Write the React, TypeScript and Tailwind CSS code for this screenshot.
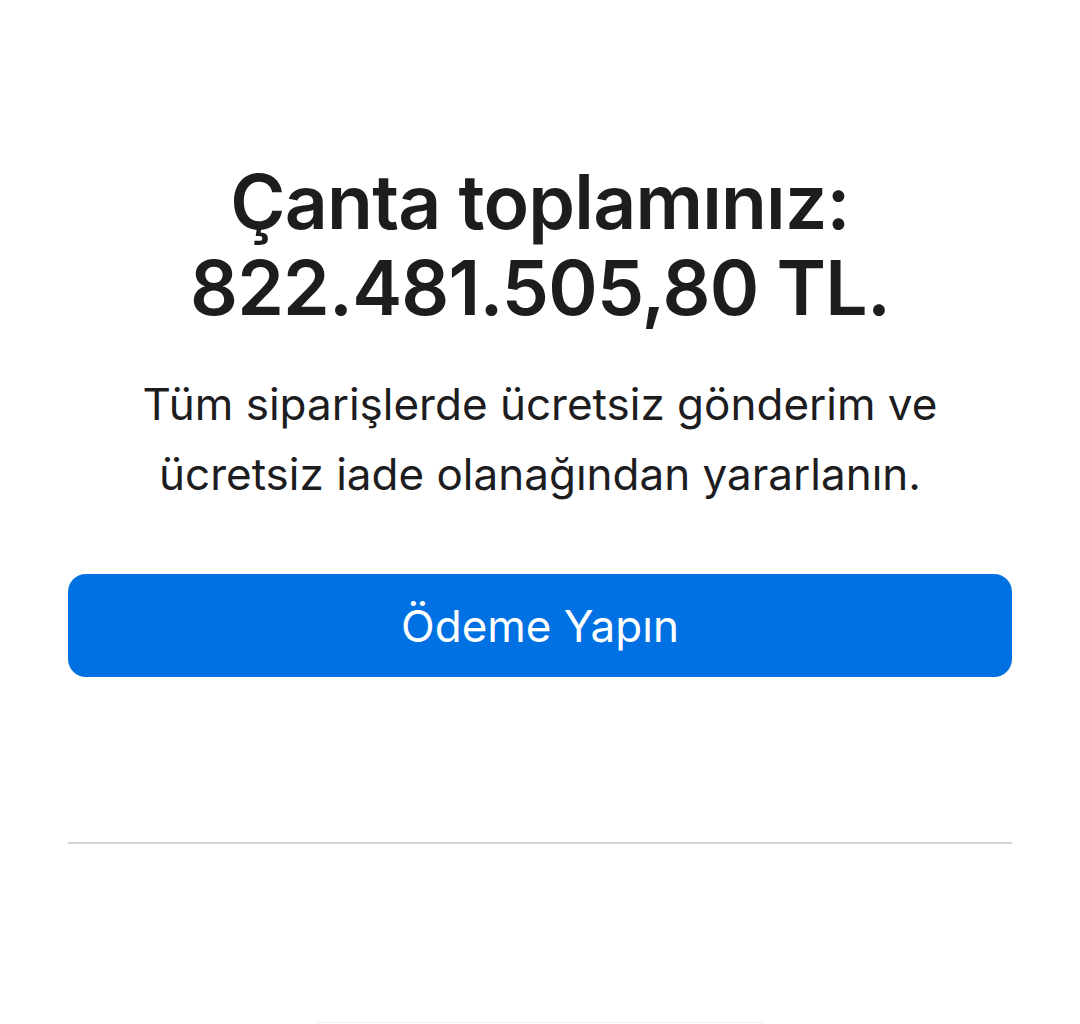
export default function App() {
  return (
    <div
      className="min-h-[1024px] w-full bg-white px-[68px] text-[#1d1d1f]"
      style={{ fontFamily: 'Inter, "Noto Sans", "Liberation Sans", sans-serif' }}
    >
      <div className="flex flex-col items-center pt-[159px]">
        <h1 className="text-center text-[75px] font-semibold leading-[86px] tracking-[-0.8px]">
          Çanta toplamınız:
          <br />
          822.481.505,80 TL.
        </h1>
        <p className="mt-[38px] text-center text-[44px] font-normal leading-[70px]">
          Tüm siparişlerde ücretsiz gönderim ve
          <br />
          ücretsiz iade olanağından yararlanın.
        </p>
      </div>
      <button className="mt-[65px] flex h-[103px] w-full items-center justify-center rounded-[18px] bg-[#0071e3] text-[44px] font-normal text-white">
        Ödeme Yapın
      </button>
      <div className="mt-[165px] h-[2px] w-full bg-[#d2d2d7]" />
      <div className="mx-auto mt-[178px] h-px w-[450px] bg-[#f0f0f2]" />
    </div>
  );
}
